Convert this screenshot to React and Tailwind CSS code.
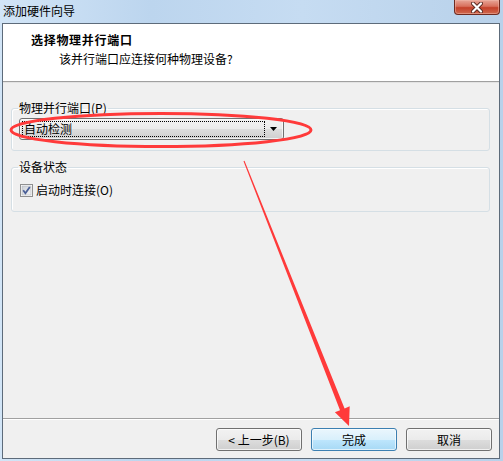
import React from "react";

const font = { fontFamily: '"Noto Sans CJK SC", "Noto Sans", sans-serif' };

function Btn({ children, primary }) {
  return (
    <div
      className={
        "w-[86px] h-[23px] rounded-[3px] border flex items-center justify-center text-[12px] leading-none text-black " +
        (primary
          ? "border-[#3c7fb1] bg-[linear-gradient(#eaf6fd_0%,#d9f0fc_50%,#bee6fd_51%,#a7d9f5_100%)] shadow-[inset_0_0_0_1px_#ffffffa0]"
          : "border-[#707070] bg-[linear-gradient(#f2f2f2_0%,#ebebeb_50%,#dddddd_51%,#cfcfcf_100%)] shadow-[inset_0_0_0_1px_#ffffffb0]")
      }
    >
      {children}
    </div>
  );
}

export default function App() {
  return (
    <div
      style={font}
      className="relative w-[503px] h-[461px] overflow-hidden bg-[linear-gradient(90deg,#d2e5f7_0%,#bcd5ee_30%,#c6dcf2_60%,#b8d1ea_100%)] flex flex-col"
    >
      {/* Title bar */}
      <div className="h-[23px] flex items-start relative">
        <span className="ml-[3px] mt-[4px] text-[12px] leading-[14px] text-black">添加硬件向导</span>
        <div className="absolute left-[454px] top-0 w-[46px] h-[15px] rounded-b-[4px] border border-t-0 border-[#6e2a20] bg-[linear-gradient(#e8a698_0%,#d8705d_45%,#c4402a_55%,#d06a4f_100%)] flex items-center justify-center shadow-[inset_0_0_0_1px_#f2b9ac80]">
          <svg width="12" height="11" viewBox="0 0 12 11">
            <path d="M2 1.5 L10 9.5 M10 1.5 L2 9.5" stroke="#5a2a22" strokeWidth="4" strokeLinecap="round" />
            <path d="M2 1.5 L10 9.5 M10 1.5 L2 9.5" stroke="#ffffff" strokeWidth="2.2" strokeLinecap="round" />
          </svg>
        </div>
      </div>

      {/* Client area */}
      <div className="ml-[2px] mr-[3px] h-[436px] border border-[#5d6b7a] bg-[#f0f0f0] flex flex-col">
        {/* Header */}
        <div className="h-[57px] bg-white pl-[28px] pt-[9px]">
          <div className="text-[12px] leading-[14px] font-bold tracking-[0.7px] text-black">选择物理并行端口</div>
          <div className="mt-[5px] ml-[28px] text-[12px] leading-[14px] text-black">该并行端口应连接何种物理设备?</div>
        </div>
        <div className="h-[1px] bg-[#a0a0a0]" />
        <div className="h-[1px] bg-[#e3e3e3]" />

        {/* Body */}
        <div className="flex-1 flex flex-col">
          <fieldset className="mt-[18px] ml-[8px] mr-[9px] border border-[#d5dfe5] rounded-[3px] pb-[10px] shadow-[inset_1px_1px_0_#ffffff]">
            <legend className="ml-[6px] px-[1px] text-[12px] leading-[14px] text-black">物理并行端口(P)</legend>
            <div className="mt-[3px] ml-[7px] w-[265px] h-[22px] rounded-[3px] border border-[#707070] bg-[linear-gradient(#f2f2f2_0%,#ebebeb_50%,#dddddd_51%,#cfcfcf_100%)] shadow-[inset_0_0_0_1px_#ffffffb0] flex items-center p-[2px]">
              <div className="h-[16px] w-[243px] border border-dotted border-black flex items-center pl-[1px] text-[12px] leading-none text-black">
                自动检测
              </div>
              <div className="flex-1 flex items-center justify-center">
                <svg width="7" height="4" viewBox="0 0 7 4">
                  <path d="M0 0 H7 L3.5 4 Z" fill="#000" />
                </svg>
              </div>
            </div>
          </fieldset>

          <fieldset className="mt-[9px] ml-[8px] mr-[9px] border border-[#d5dfe5] rounded-[3px] pb-[14px] shadow-[inset_1px_1px_0_#ffffff]">
            <legend className="ml-[6px] px-[1px] text-[12px] leading-[14px] text-black">设备状态</legend>
            <div className="mt-[9px] ml-[8px] flex items-center">
              <svg width="13" height="13" viewBox="0 0 13 13">
                <defs>
                  <linearGradient id="cb" x1="0" y1="0" x2="1" y2="1">
                    <stop offset="0" stopColor="#cbcfd5" />
                    <stop offset="1" stopColor="#f6f6f6" />
                  </linearGradient>
                </defs>
                <rect x="0.5" y="0.5" width="12" height="12" fill="#fff" stroke="#8f8f8f" />
                <rect x="2" y="2" width="9" height="9" fill="url(#cb)" stroke="#aeb3b9" strokeWidth="0.6" />
                <path d="M3.2 6.3 L5.4 9.2 L9.8 3" stroke="#4a5f97" strokeWidth="1.8" fill="none" />
              </svg>
              <span className="ml-[3px] text-[12px] leading-[14px] text-black">启动时连接(O)</span>
            </div>
          </fieldset>

          <div className="flex-1" />
          <div className="h-[1px] bg-[#a0a0a0]" />
          <div className="h-[1px] bg-[#ffffff]" />
          <div className="mt-[8px] mb-[7px] mr-[7px] flex justify-end gap-[9px]">
            <Btn>&lt; 上一步(B)</Btn>
            <Btn primary>完成</Btn>
            <Btn>取消</Btn>
          </div>
        </div>
      </div>

      {/* Red annotations overlay */}
      <svg className="absolute left-0 top-0 pointer-events-none" width="503" height="461" viewBox="0 0 503 461">
        <ellipse cx="161" cy="130" rx="150" ry="16.5" fill="none" stroke="#ff3a3a" strokeWidth="3" />
        <polygon
          points="244.5,160.8 344.6,408.4 349.7,406.3 349,426 334.9,412.3 340,410.2 243.5,161.2"
          fill="#ff3a3a"
        />
      </svg>
    </div>
  );
}
